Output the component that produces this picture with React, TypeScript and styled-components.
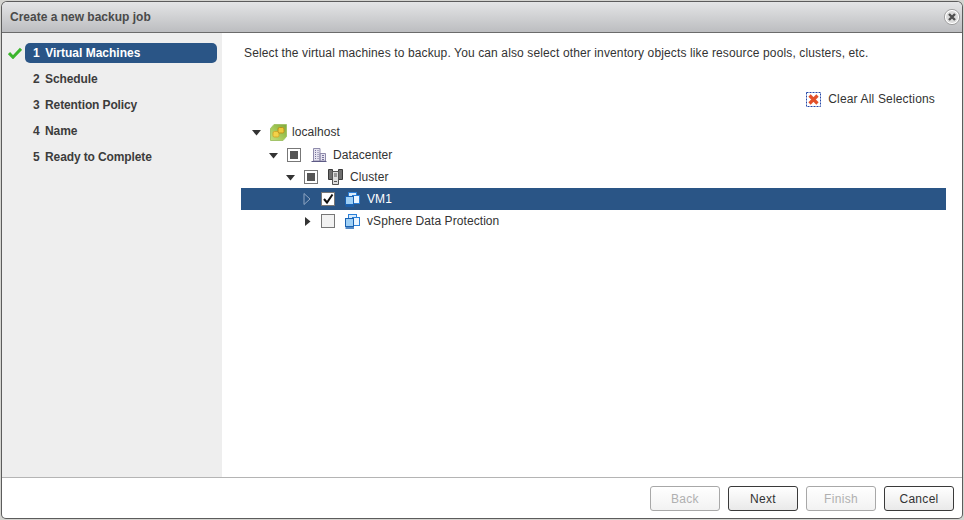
import styled, { createGlobalStyle } from 'styled-components';

const GlobalStyle = createGlobalStyle`
  html, body {
    margin: 0;
    padding: 0;
    background: #d4d4d0;
  }
  body {
    font-family: "Liberation Sans", Arial, sans-serif;
    font-size: 12px;
    color: #333;
  }
`;

const steps = ['Virtual Machines', 'Schedule', 'Retention Policy', 'Name', 'Ready to Complete'];

const Page = styled.div`
  width: 964px;
  height: 520px;
  padding: 2px 2px 2px 2px;
  box-sizing: border-box;
  overflow: hidden;
`;

const Dialog = styled.div`
  height: 100%;
  display: flex;
  flex-direction: column;
  border-radius: 5px 5px 4px 4px;
  box-shadow: 0 0 0 1px #5c5c5c;
  background: #fff;
  overflow: hidden;
`;

const TitleBar = styled.div`
  flex: 0 0 30px;
  display: flex;
  align-items: center;
  justify-content: space-between;
  padding: 0 2px 0 8px;
  background: linear-gradient(#e4e5e6, #bcbdc0);
  border-bottom: 1px solid #6b6b6b;
`;

const Title = styled.span`
  font-size: 12px;
  font-weight: bold;
  color: #4a4a4a;
`;

const Body = styled.div`
  flex: 1;
  display: flex;
  min-height: 0;
`;

const Sidebar = styled.nav`
  flex: 0 0 220px;
  background: #eeeeee;
  padding-top: 10px;
  box-sizing: border-box;
`;

const StepRow = styled.div`
  height: 20px;
  margin-bottom: 6px;
  display: flex;
  align-items: center;
  padding-left: 6px;
`;

const CheckSlot = styled.span`
  flex: 0 0 17px;
  display: flex;
`;

const StepLabel = styled.div<{ $active: boolean }>`
  width: 192px;
  height: 20px;
  box-sizing: border-box;
  padding-left: 8px;
  display: flex;
  align-items: center;
  gap: 5.5px;
  border-radius: 5px;
  font-weight: bold;
  white-space: pre;
  letter-spacing: ${({ $active }) => ($active ? '0' : '-0.12px')};
  color: ${({ $active }) => ($active ? '#fff' : '#3c3c3c')};
  background: ${({ $active }) => ($active ? '#2a5586' : 'transparent')};
`;

const Content = styled.main`
  flex: 1;
  padding: 13px 16px 0 19px;
  min-width: 0;
`;

const Intro = styled.p`
  margin: 0 0 0 3px;
  line-height: 14px;
  color: #333;
  letter-spacing: 0.125px;
  white-space: nowrap;
`;

const ClearRow = styled.div`
  display: flex;
  justify-content: flex-end;
  align-items: center;
  gap: 7px;
  margin-top: 31px;
  padding-right: 11px;
  height: 16px;
  letter-spacing: 0.17px;
  color: #333;
`;

const Tree = styled.div`
  margin-top: 14px;
`;

const TreeRow = styled.div<{ $level: number; $selected?: boolean }>`
  height: 22px;
  margin-bottom: ${({ $level }) => ($level === 0 ? 1 : 0)}px;
  display: flex;
  align-items: center;
  padding-left: ${({ $level }) => 10 + $level * 17}px;
  background: ${({ $selected }) => ($selected ? '#2a5586' : 'transparent')};
  color: ${({ $selected }) => ($selected ? '#fff' : '#333')};
  letter-spacing: 0.07px;
  white-space: nowrap;
`;

const ArrowSlot = styled.span`
  flex: 0 0 19px;
  display: flex;
`;

const CheckBox = styled.span<{ $light?: boolean }>`
  flex: 0 0 14px;
  width: 14px;
  height: 14px;
  box-sizing: border-box;
  margin-right: 10px;
  border: 1px solid #777;
  background: ${({ $light }) => ($light ? '#f2f2f2' : '#fff')};
  display: flex;
  align-items: center;
  justify-content: center;
`;

const MixedMark = styled.span`
  width: 8px;
  height: 8px;
  background: #555;
`;

const NodeIcon = styled.span<{ $width: number }>`
  flex: 0 0 ${({ $width }) => $width}px;
  display: flex;
`;

const Footer = styled.footer`
  flex: 0 0 41px;
  border-top: 1px solid #b4b4b4;
  display: flex;
  justify-content: flex-end;
  align-items: flex-start;
  gap: 8px;
  padding: 8px 8px 0 0;
  box-sizing: border-box;
`;

const WizardButton = styled.button<{ $disabled?: boolean }>`
  width: 70px;
  height: 25px;
  padding: 0;
  border-radius: 3px;
  border: 1px solid ${({ $disabled }) => ($disabled ? '#a8a8a8' : '#3a3a3a')};
  background: ${({ $disabled }) =>
    $disabled ? 'linear-gradient(#fff, #f2f2f2)' : 'linear-gradient(#fff, #e9e9e9)'};
  color: ${({ $disabled }) => ($disabled ? '#b0b0b0' : '#333')};
  font-family: inherit;
  font-size: 12px;
  letter-spacing: 0.3px;
`;

const CloseIcon = () => (
  <svg width="16" height="16" viewBox="0 0 16 16">
    <circle cx="8" cy="8" r="7.6" fill="#fff" stroke="#8e8e8e" strokeWidth="0.8" />
    <circle cx="8" cy="8" r="6" fill="#dcdcdc" />
    <path d="M5 5l6 6M11 5l-6 6" stroke="#4f4f4f" strokeWidth="2.4" />
  </svg>
);

const GreenCheck = () => (
  <svg width="14" height="12" viewBox="0 0 14 12">
    <path d="M1 6l4 4.2L13 1.8" fill="none" stroke="#3bb52c" strokeWidth="3" />
  </svg>
);

const ClearIcon = () => (
  <svg width="15" height="15" viewBox="0 0 15 15">
    <rect x="0.5" y="0.5" width="14" height="14" fill="#fff" stroke="#2347a8" strokeDasharray="2 1" />
    <path d="M3.5 3.5l8 8M11.5 3.5l-8 8" stroke="#e2502a" strokeWidth="3.2" />
  </svg>
);

const Arrow = ({ dir, outline }: { dir: 'down' | 'right'; outline?: boolean }) =>
  dir === 'down' ? (
    <svg width="11" height="7" viewBox="0 0 11 7">
      <path d="M1 1h9L5.5 6.5z" fill="#333" />
    </svg>
  ) : outline ? (
    <svg width="11" height="12" viewBox="0 0 11 12">
      <path d="M2 0.5v11l6-5.5z" fill="none" stroke="#8fa6c2" />
    </svg>
  ) : (
    <svg width="11" height="11" viewBox="0 0 11 11">
      <path d="M3 1v9l5.5-4.5z" fill="#333" />
    </svg>
  );

const HostIcon = () => (
  <svg width="17" height="17" viewBox="0 0 17 17">
    <defs>
      <linearGradient id="hostFill" x1="0" y1="1" x2="1" y2="0">
        <stop offset="0" stopColor="#c5e07c" />
        <stop offset="0.55" stopColor="#9fc552" />
        <stop offset="1" stopColor="#7fa83e" />
      </linearGradient>
    </defs>
    <path d="M4 0.5h12.5v12l-3.5 4H0.5v-12z" fill="url(#hostFill)" stroke="#a3c46a" />
    <rect x="3" y="7.5" width="6" height="5.5" rx="1.5" fill="#f3d24a" stroke="#d3ab2c" />
    <rect x="8" y="3.5" width="6" height="5.5" rx="1.5" fill="#efc93a" stroke="#b8911d" />
  </svg>
);

const DatacenterIcon = () => (
  <svg width="16" height="16" viewBox="0 0 16 16">
    <path d="M2.5 1.5h6.5v12.5H2.5zM9 6.5h5.5V14H9z" fill="#e6e4f0" stroke="#8f8bab" />
    <path d="M4 3.5h1M6.5 3.5h1M4 5.5h1M6.5 5.5h1M4 7.5h1M6.5 7.5h1M4 9.5h1M6.5 9.5h1M4 11.5h1M6.5 11.5h1M11 8.5h2M11 10.5h2M11 12.5h2" stroke="#77739a" />
    <path d="M0.5 14.5h15" stroke="#5d5a85" />
  </svg>
);

const ClusterIcon = () => (
  <svg width="15" height="16" viewBox="0 0 15 16">
    <path d="M0.5 0.5h4v10h-4zM10.5 0.5h4v10h-4z" fill="#6f6f6f" stroke="#3a3a3a" />
    <path d="M4.5 2.5h6v13h-6z" fill="#dedede" stroke="#555" />
    <path d="M6 5h3M6 7h3M6 12.5h3" stroke="#555" />
  </svg>
);

const VmIcon = () => (
  <svg width="15" height="15" viewBox="0 0 15 15">
    <rect x="3.5" y="0.5" width="8" height="7" fill="#d9ecfc" stroke="#2a7fd8" />
    <rect x="7.5" y="3.5" width="7" height="8" fill="#eaf5ff" stroke="#2a7fd8" />
    <rect x="0.5" y="4.5" width="8" height="8" fill="#9fd0f6" stroke="#1a62b2" />
    <path d="M0.5 14h8.5" stroke="#1a62b2" strokeWidth="1.4" />
  </svg>
);

const BlackTick = () => (
  <svg width="12" height="12" viewBox="0 0 12 12">
    <path d="M2 6l3 3.5L10.5 1.5" fill="none" stroke="#111" strokeWidth="2" />
  </svg>
);

export default function App() {
  return (
    <Page>
      <GlobalStyle />
      <Dialog>
        <TitleBar>
          <Title>Create a new backup job</Title>
          <CloseIcon />
        </TitleBar>
        <Body>
          <Sidebar>
            {steps.map((step, index) => (
              <StepRow key={step}>
                <CheckSlot>{index === 0 && <GreenCheck />}</CheckSlot>
                <StepLabel $active={index === 0}>
                  <span>{index + 1}</span>
                  <span>{step}</span>
                </StepLabel>
              </StepRow>
            ))}
          </Sidebar>
          <Content>
            <Intro>
              Select the virtual machines to backup. You can also select other inventory objects like
              resource pools, clusters, etc.
            </Intro>
            <ClearRow>
              <ClearIcon />
              <span>Clear All Selections</span>
            </ClearRow>
            <Tree>
              <TreeRow $level={0}>
                <ArrowSlot>
                  <Arrow dir="down" />
                </ArrowSlot>
                <NodeIcon $width={22}>
                  <HostIcon />
                </NodeIcon>
                localhost
              </TreeRow>
              <TreeRow $level={1}>
                <ArrowSlot>
                  <Arrow dir="down" />
                </ArrowSlot>
                <CheckBox>
                  <MixedMark />
                </CheckBox>
                <NodeIcon $width={22}>
                  <DatacenterIcon />
                </NodeIcon>
                Datacenter
              </TreeRow>
              <TreeRow $level={2}>
                <ArrowSlot>
                  <Arrow dir="down" />
                </ArrowSlot>
                <CheckBox>
                  <MixedMark />
                </CheckBox>
                <NodeIcon $width={22}>
                  <ClusterIcon />
                </NodeIcon>
                Cluster
              </TreeRow>
              <TreeRow $level={3} $selected>
                <ArrowSlot>
                  <Arrow dir="right" outline />
                </ArrowSlot>
                <CheckBox>
                  <BlackTick />
                </CheckBox>
                <NodeIcon $width={22}>
                  <VmIcon />
                </NodeIcon>
                VM1
              </TreeRow>
              <TreeRow $level={3}>
                <ArrowSlot>
                  <Arrow dir="right" />
                </ArrowSlot>
                <CheckBox $light />
                <NodeIcon $width={22}>
                  <VmIcon />
                </NodeIcon>
                vSphere Data Protection
              </TreeRow>
            </Tree>
          </Content>
        </Body>
        <Footer>
          <WizardButton $disabled disabled>Back</WizardButton>
          <WizardButton>Next</WizardButton>
          <WizardButton $disabled disabled>Finish</WizardButton>
          <WizardButton>Cancel</WizardButton>
        </Footer>
      </Dialog>
    </Page>
  );
}
